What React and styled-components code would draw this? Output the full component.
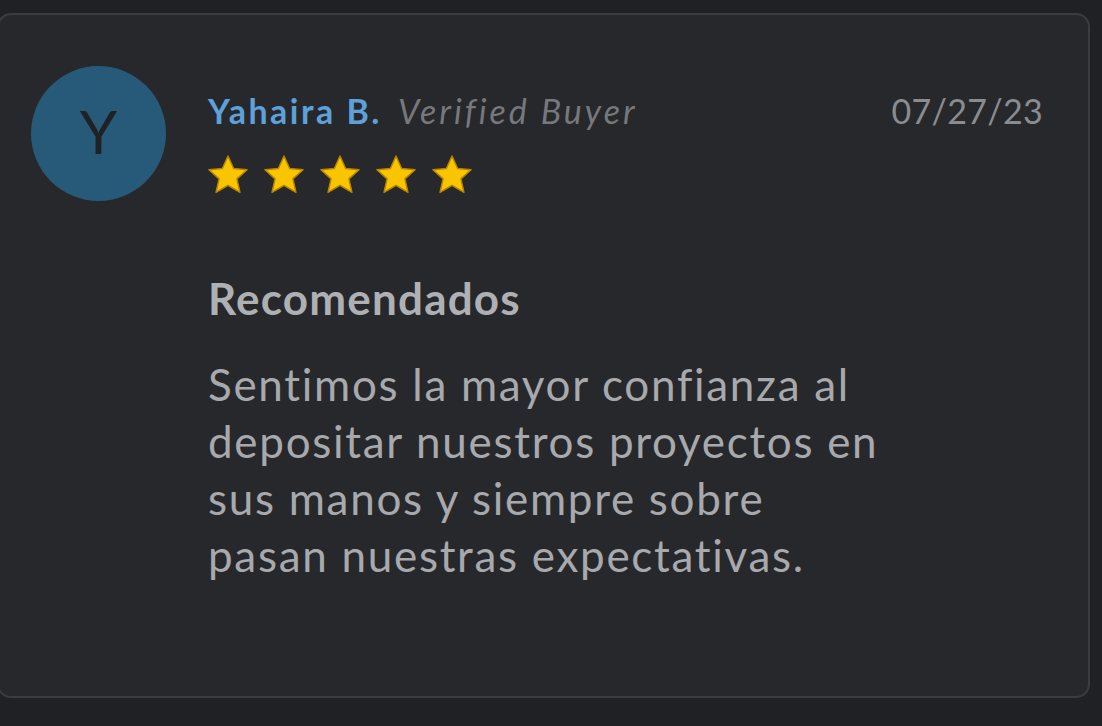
import React from 'react'
import styled, { createGlobalStyle } from 'styled-components'

const Global = createGlobalStyle`
    html, body {
        margin: 0;
        padding: 0;
        background: #202124;
    }
    body {
        font-family: Lato, "Open Sans", sans-serif;
    }
`

function Star() {
    return (
        <svg width="40" height="38" viewBox="1 0.7 22 20.8">
            <path
                d="M12 1.2l3.1 6.9 7.4.7-5.6 5 1.7 7.4L12 17.3l-6.6 3.9 1.7-7.4-5.6-5 7.4-.7z"
                fill="#f8c500"
                stroke="#b98300"
                strokeWidth="0.8"
                strokeLinejoin="round"
            />
        </svg>
    )
}

function App() {
    return (
        <Page>
            <Global />
            <Card>
                <Avatar>Y</Avatar>
                <Content>
                    <Header>
                        <Name>Yahaira B.</Name>
                        <Verified>Verified Buyer</Verified>
                        <DateText>07/27/23</DateText>
                    </Header>
                    <Stars>
                        {[0, 1, 2, 3, 4].map(i => <Star key={i} />)}
                    </Stars>
                    <Title>Recomendados</Title>
                    <Body>
                        Sentimos la mayor confianza al depositar nuestros proyectos en sus manos y siempre sobre pasan nuestras expectativas.
                    </Body>
                </Content>
            </Card>
        </Page>
    )
}

export default App

const Page = styled.div`
    width: 1102px;
    height: 726px;
    overflow: hidden;
    padding: 13px 12px 0 0;
    box-sizing: border-box;
    background: #202124;
`

const Card = styled.div`
    margin-left: -3px;
    height: 685px;
    box-sizing: border-box;
    background: #27282b;
    border: 2px solid #3b3c3f;
    border-radius: 14px;
    padding: 51px 45px 0 32px;
    display: flex;
    gap: 42px;
`

const Avatar = styled.div`
    flex: none;
    width: 135px;
    height: 135px;
    box-sizing: border-box;
    padding-bottom: 6px;
    border-radius: 50%;
    background: #275a79;
    color: #1f2124;
    font-size: 60px;
    font-weight: 400;
    display: flex;
    align-items: center;
    justify-content: center;
`

const Content = styled.div`
    flex: 1;
    display: flex;
    flex-direction: column;
    padding-top: 24px;
`

const Header = styled.div`
    display: flex;
    align-items: baseline;
    gap: 16px;
    font-size: 34px;
    line-height: 42px;
`

const Name = styled.span`
    color: #5ea0d9;
    font-weight: 700;
    letter-spacing: 2.5px;
`

const Verified = styled.span`
    color: #76787c;
    font-style: italic;
    letter-spacing: 3px;
`

const DateText = styled.span`
    margin-left: auto;
    color: #8a8c90;
    letter-spacing: 0.3px;
`

const Stars = styled.div`
    display: flex;
    gap: 16px;
    margin-top: 23px;
`

const Title = styled.h3`
    margin: 79px 0 0;
    font-size: 44px;
    font-weight: 700;
    color: #aeb0b3;
    line-height: 52px;
    letter-spacing: 1.2px;
`

const Body = styled.p`
    margin: 32px 0 0;
    max-width: 680px;
    font-size: 44px;
    line-height: 57px;
    color: #a7a9ad;
    letter-spacing: 1.7px;
`
